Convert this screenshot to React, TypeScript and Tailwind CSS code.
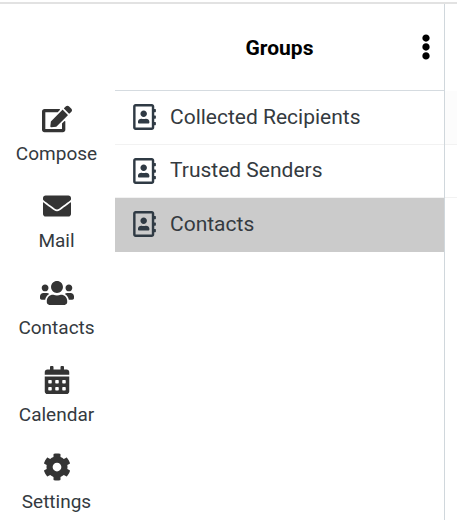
import { FaCalendarAlt, FaCog, FaEdit, FaEllipsisV, FaEnvelope, FaRegAddressBook, FaUsers } from "react-icons/fa";

const navItems = [
  { label: "Compose", icon: FaEdit, size: "w-[30px]" },
  { label: "Mail", icon: FaEnvelope, size: "w-[30px]" },
  { label: "Contacts", icon: FaUsers, size: "w-[34px]" },
  { label: "Calendar", icon: FaCalendarAlt, size: "w-[30px]" },
  { label: "Settings", icon: FaCog, size: "w-[30px]" },
];

const groups = [
  { label: "Collected Recipients", active: false },
  { label: "Trusted Senders", active: false },
  { label: "Contacts", active: true },
];

export default function App() {
  return (
    <div className="flex h-[520px] w-[457px] flex-col overflow-hidden bg-white font-['Roboto',sans-serif] text-[#343a40]">
      <div className="mt-[2px] h-[2px] bg-[#e2e2e2]" />
      <div className="flex min-h-0 flex-1">
        <nav className="flex w-[115px] shrink-0 flex-col pr-[2px] pt-[98px]">
          {navItems.map((item) => (
            <div key={item.label} className="flex h-[87px] shrink-0 flex-col items-center">
              <item.icon className={`mt-[3px] h-[28px] text-[#343434] ${item.size}`} />
              <span className="mt-[7px] text-[19px] leading-[28px]">{item.label}</span>
            </div>
          ))}
        </nav>
        <main className="w-[330px] shrink-0 border-r border-[#d0d7dc]">
          <header className="relative flex h-[87px] items-center justify-center border-b border-[#d5dbe0]">
            <h1 className="pt-[2px] text-[21px] font-bold leading-none text-black">Groups</h1>
            <FaEllipsisV className="absolute right-[5px] top-[30px] h-[26px] w-[26px] text-black" />
          </header>
          <ul>
            {groups.map((group) => (
              <li
                key={group.label}
                className={
                  group.active
                    ? "flex h-[53.5px] items-center gap-[13px] bg-[#cbcbcb] pb-[1px] pl-[17px]"
                    : "flex h-[53.5px] items-center gap-[13px] border-b border-[#f2f2f2] pl-[17px]"
                }
              >
                <FaRegAddressBook className="h-[26px] w-[25px] text-[#2f3a44]" />
                <span className="text-[21px] leading-none">{group.label}</span>
              </li>
            ))}
          </ul>
        </main>
        <aside className="flex-1 pt-[87px]">
          <div className="h-[53.5px] border-b border-[#f2f2f2] bg-[#fcfcfc]" />
          <div className="h-[53.5px] border-b border-[#f2f2f2]" />
        </aside>
      </div>
    </div>
  );
}
